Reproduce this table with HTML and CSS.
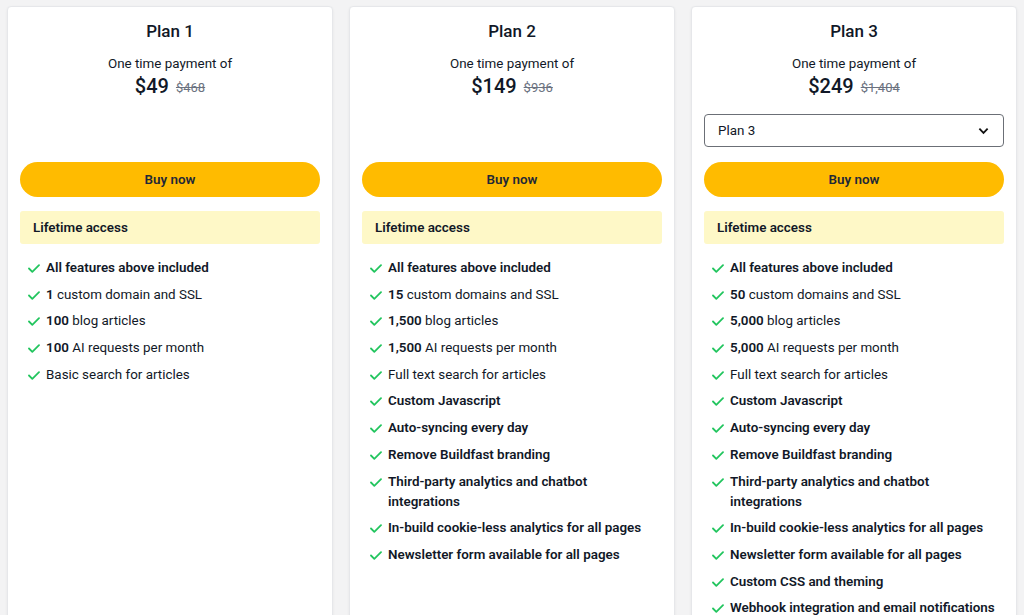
FILE: index.html
```html
<!DOCTYPE html>
<html lang="en">
<head>
<meta charset="utf-8">
<title>Pricing</title>
<link rel="stylesheet" href="styles.css">
</head>
<body>
<div class="plans">
  <div class="card">
    <h2 class="title">Plan 1</h2>
    <p class="sub">One time payment of</p>
    <p class="price"><span class="now">$49</span><s class="was">$468</s></p>
    <div class="select-slot"></div>
    <button class="buy">Buy now</button>
    <div class="access">Lifetime access</div>
    <ul class="features">
      <li><svg class="check" viewBox="0 0 12 9"><path d="M1 4.5L4.3 7.8L11 1.2"/></svg><span><b>All features above included</b></span></li>
      <li><svg class="check" viewBox="0 0 12 9"><path d="M1 4.5L4.3 7.8L11 1.2"/></svg><span><b>1</b> custom domain and SSL</span></li>
      <li><svg class="check" viewBox="0 0 12 9"><path d="M1 4.5L4.3 7.8L11 1.2"/></svg><span><b>100</b> blog articles</span></li>
      <li><svg class="check" viewBox="0 0 12 9"><path d="M1 4.5L4.3 7.8L11 1.2"/></svg><span><b>100</b> AI requests per month</span></li>
      <li><svg class="check" viewBox="0 0 12 9"><path d="M1 4.5L4.3 7.8L11 1.2"/></svg><span>Basic search for articles</span></li>
    </ul>
  </div>
  <div class="card">
    <h2 class="title">Plan 2</h2>
    <p class="sub">One time payment of</p>
    <p class="price"><span class="now">$149</span><s class="was">$936</s></p>
    <div class="select-slot"></div>
    <button class="buy">Buy now</button>
    <div class="access">Lifetime access</div>
    <ul class="features">
      <li><svg class="check" viewBox="0 0 12 9"><path d="M1 4.5L4.3 7.8L11 1.2"/></svg><span><b>All features above included</b></span></li>
      <li><svg class="check" viewBox="0 0 12 9"><path d="M1 4.5L4.3 7.8L11 1.2"/></svg><span><b>15</b> custom domains and SSL</span></li>
      <li><svg class="check" viewBox="0 0 12 9"><path d="M1 4.5L4.3 7.8L11 1.2"/></svg><span><b>1,500</b> blog articles</span></li>
      <li><svg class="check" viewBox="0 0 12 9"><path d="M1 4.5L4.3 7.8L11 1.2"/></svg><span><b>1,500</b> AI requests per month</span></li>
      <li><svg class="check" viewBox="0 0 12 9"><path d="M1 4.5L4.3 7.8L11 1.2"/></svg><span>Full text search for articles</span></li>
      <li><svg class="check" viewBox="0 0 12 9"><path d="M1 4.5L4.3 7.8L11 1.2"/></svg><span><b>Custom Javascript</b></span></li>
      <li><svg class="check" viewBox="0 0 12 9"><path d="M1 4.5L4.3 7.8L11 1.2"/></svg><span><b>Auto-syncing every day</b></span></li>
      <li><svg class="check" viewBox="0 0 12 9"><path d="M1 4.5L4.3 7.8L11 1.2"/></svg><span><b>Remove Buildfast branding</b></span></li>
      <li><svg class="check" viewBox="0 0 12 9"><path d="M1 4.5L4.3 7.8L11 1.2"/></svg><span><b>Third-party analytics and chatbot integrations</b></span></li>
      <li><svg class="check" viewBox="0 0 12 9"><path d="M1 4.5L4.3 7.8L11 1.2"/></svg><span><b>In-build cookie-less analytics for all pages</b></span></li>
      <li><svg class="check" viewBox="0 0 12 9"><path d="M1 4.5L4.3 7.8L11 1.2"/></svg><span><b>Newsletter form available for all pages</b></span></li>
    </ul>
  </div>
  <div class="card">
    <h2 class="title">Plan 3</h2>
    <p class="sub">One time payment of</p>
    <p class="price"><span class="now">$249</span><s class="was">$1,404</s></p>
    <div class="select-slot">
      <div class="select"><span>Plan 3</span><svg class="chev" viewBox="0 0 12 8"><path d="M1.5 1.5L6 6L10.5 1.5"/></svg></div>
    </div>
    <button class="buy">Buy now</button>
    <div class="access">Lifetime access</div>
    <ul class="features">
      <li><svg class="check" viewBox="0 0 12 9"><path d="M1 4.5L4.3 7.8L11 1.2"/></svg><span><b>All features above included</b></span></li>
      <li><svg class="check" viewBox="0 0 12 9"><path d="M1 4.5L4.3 7.8L11 1.2"/></svg><span><b>50</b> custom domains and SSL</span></li>
      <li><svg class="check" viewBox="0 0 12 9"><path d="M1 4.5L4.3 7.8L11 1.2"/></svg><span><b>5,000</b> blog articles</span></li>
      <li><svg class="check" viewBox="0 0 12 9"><path d="M1 4.5L4.3 7.8L11 1.2"/></svg><span><b>5,000</b> AI requests per month</span></li>
      <li><svg class="check" viewBox="0 0 12 9"><path d="M1 4.5L4.3 7.8L11 1.2"/></svg><span>Full text search for articles</span></li>
      <li><svg class="check" viewBox="0 0 12 9"><path d="M1 4.5L4.3 7.8L11 1.2"/></svg><span><b>Custom Javascript</b></span></li>
      <li><svg class="check" viewBox="0 0 12 9"><path d="M1 4.5L4.3 7.8L11 1.2"/></svg><span><b>Auto-syncing every day</b></span></li>
      <li><svg class="check" viewBox="0 0 12 9"><path d="M1 4.5L4.3 7.8L11 1.2"/></svg><span><b>Remove Buildfast branding</b></span></li>
      <li><svg class="check" viewBox="0 0 12 9"><path d="M1 4.5L4.3 7.8L11 1.2"/></svg><span><b>Third-party analytics and chatbot integrations</b></span></li>
      <li><svg class="check" viewBox="0 0 12 9"><path d="M1 4.5L4.3 7.8L11 1.2"/></svg><span><b>In-build cookie-less analytics for all pages</b></span></li>
      <li><svg class="check" viewBox="0 0 12 9"><path d="M1 4.5L4.3 7.8L11 1.2"/></svg><span><b>Newsletter form available for all pages</b></span></li>
      <li><svg class="check" viewBox="0 0 12 9"><path d="M1 4.5L4.3 7.8L11 1.2"/></svg><span><b>Custom CSS and theming</b></span></li>
      <li><svg class="check" viewBox="0 0 12 9"><path d="M1 4.5L4.3 7.8L11 1.2"/></svg><span><b>Webhook integration and email notifications</b></span></li>
    </ul>
  </div>
</div>
</body>
</html>
```

FILE: styles.css
```css
* { box-sizing: border-box; }
html, body { margin: 0; padding: 0; }
body {
  background: #f3f3f4;
  font-family: Roboto, "Liberation Sans", sans-serif;
  color: #111827;
  font-size: 13.4px;
  line-height: 20px;
}
.plans {
  display: grid;
  grid-template-columns: repeat(3, 326px);
  gap: 16px;
  padding: 6px 7px;
}
.card {
  background: #fff;
  border: 1px solid #e6e7ea;
  border-radius: 4px;
  box-shadow: 0 1px 3px rgba(0,0,0,0.06);
  padding: 10px 12px 24px;
  display: flex;
  flex-direction: column;
}
.title {
  margin: 0;
  text-align: center;
  font-size: 17px;
  line-height: 28px;
  font-weight: 500;
}
.sub {
  margin: 9px 0 0;
  text-align: center;
  font-size: 13.4px;
  line-height: 20px;
}
.price {
  margin: 0;
  text-align: center;
  line-height: 24px;
}
.now {
  font-size: 20px;
  font-weight: 500;
}
.was {
  font-size: 13px;
  color: #6b7280;
  margin-left: 7px;
  position: relative;
  top: -1px;
}
.select-slot {
  margin-top: 13px;
  height: 33px;
}
.select {
  height: 33px;
  border: 1px solid #6b6f76;
  border-radius: 4px;
  display: flex;
  align-items: center;
  justify-content: space-between;
  padding: 0 14px 0 13px;
  font-size: 13.4px;
}
.chev {
  width: 11px;
  height: 8px;
  fill: none;
  stroke: #111;
  stroke-width: 2;
}
.buy {
  margin-top: 15px;
  height: 35px;
  border: 0;
  border-radius: 18px;
  background: #ffbb00;
  color: #1f2937;
  font-family: inherit;
  font-size: 13.4px;
  font-weight: 600;
  cursor: pointer;
}
.access {
  margin-top: 14px;
  height: 33px;
  display: flex;
  align-items: center;
  padding: 0 13px;
  background: #fef8c7;
  border-radius: 3px;
  font-weight: 600;
}
.features {
  list-style: none;
  margin: 14px 0 0;
  padding: 0 8px;
  display: flex;
  flex-direction: column;
  gap: 6.7px;
}
.features li {
  display: flex;
  align-items: flex-start;
  gap: 6px;
}
.features b { font-weight: 600; }
.check {
  flex: none;
  width: 12px;
  height: 9px;
  margin-top: 6px;
  fill: none;
  stroke: #22c55e;
  stroke-width: 1.8;
  stroke-linecap: round;
  stroke-linejoin: round;
}
```
